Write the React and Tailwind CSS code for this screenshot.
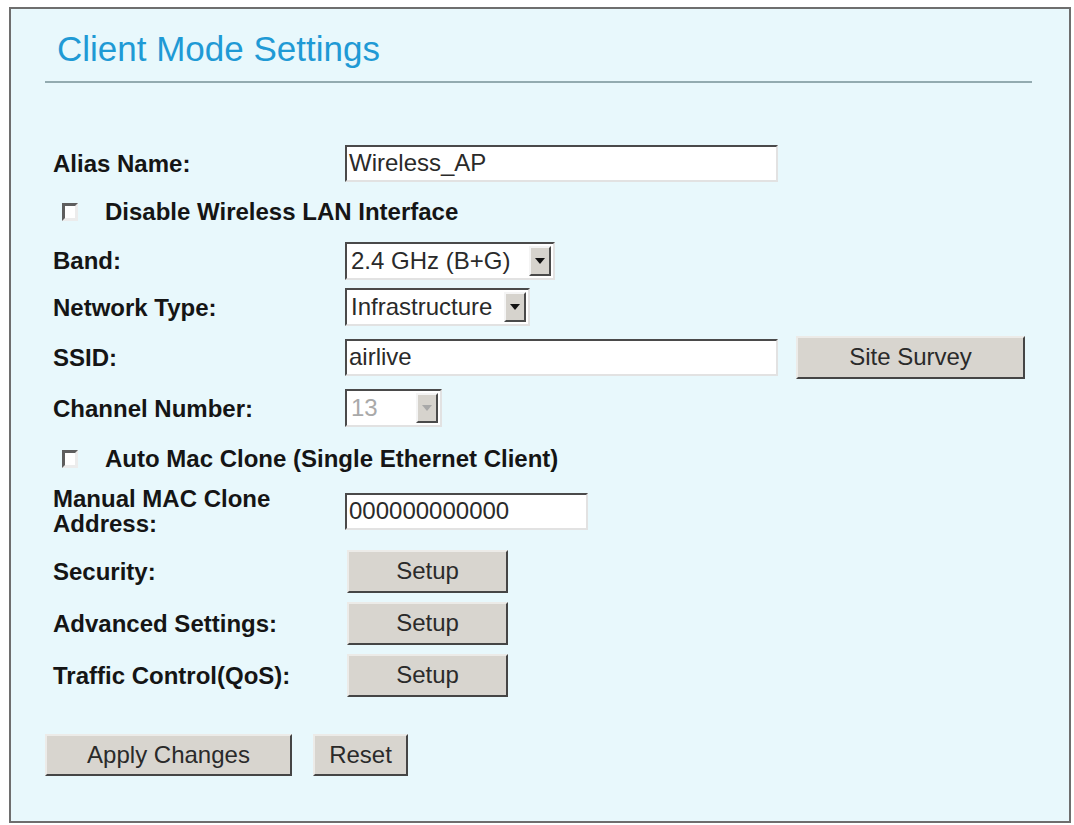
import React from 'react';

const font = { fontFamily: '"Liberation Sans", Arial, sans-serif' };

const TextInput = ({ value, width }) => (
  <div
    className={`${width} h-[37px] bg-white border-2 border-t-[#4a4a4a] border-l-[#4a4a4a] border-r-[#e2e2e2] border-b-[#e2e2e2] flex items-center pl-[2px] text-[24px] text-[#2a2a2a] leading-none`}
  >
    {value}
  </div>
);

const Arrow = ({ disabled }) => (
  <div className="w-[22px] h-[30px] bg-[#d6d3cd] border-2 border-t-[#f4f4f4] border-l-[#f4f4f4] border-r-[#4a4a4a] border-b-[#4a4a4a] flex items-center justify-center">
    <svg width="10" height="6" viewBox="0 0 10 6">
      <path d="M0 0h10L5 6z" fill={disabled ? '#a8a8a8' : '#111'} />
    </svg>
  </div>
);

const Select = ({ value, width, disabled }) => (
  <div
    className={`${width} h-[38px] bg-white border-2 border-t-[#4a4a4a] border-l-[#4a4a4a] border-r-[#e2e2e2] border-b-[#e2e2e2] flex items-center justify-between pl-[4px] pr-[2px] text-[24px] leading-none ${disabled ? 'text-[#a9a9a9]' : 'text-[#2a2a2a]'}`}
  >
    <span>{value}</span>
    <Arrow disabled={disabled} />
  </div>
);

const Button = ({ children, width, height = 'h-[43px]' }) => (
  <button
    className={`${width} ${height} bg-[#d8d5cf] border-2 border-t-[#ecebe8] border-l-[#ecebe8] border-r-[#454545] border-b-[#454545] text-[24px] text-[#2a2a2a] leading-none flex items-center justify-center`}
  >
    {children}
  </button>
);

const Checkbox = () => (
  <div className="w-[16px] h-[18px] bg-white border-[3px] border-t-[#5e5e5e] border-l-[#5e5e5e] border-r-[#ececec] border-b-[#ececec]" />
);

const Row = ({ label, h = 'h-[52px]', extra = '', children }) => (
  <div className={`flex items-center ${h} ${extra}`}>
    <div className="w-[292px] text-[24px] font-bold text-[#151515] leading-[25px]">{label}</div>
    <div className="flex items-center gap-[18px]">{children}</div>
  </div>
);

const CheckRow = ({ label, h }) => (
  <div className={`flex items-center ${h}`}>
    <div className="ml-[9px] w-[43px]">
      <Checkbox />
    </div>
    <span className="text-[24px] font-bold text-[#151515] leading-none">{label}</span>
  </div>
);

export default function App() {
  return (
    <div className="w-[1074px] h-[825px] bg-white pt-[7px] pl-[9px]" style={font}>
      <div className="w-[1062px] h-[816px] border-2 border-[#6e6e6e] bg-[#e8f8fc] flex flex-col">
        <h1 className="ml-[46px] mt-[20px] h-[40px] text-[35px] leading-[40px] text-[#1f9ad5]">
          Client Mode Settings
        </h1>
        <div className="ml-[34px] mt-[12px] w-[987px] h-[2px] bg-[#93abb0]" />

        <div className="ml-[42px] mt-[57px] flex flex-col">
          <Row label="Alias Name:" h="h-[46px]">
            <TextInput value="Wireless_AP" width="w-[433px]" />
          </Row>
          <CheckRow label="Disable Wireless LAN Interface" h="h-[52px]" />
          <Row label="Band:" h="h-[45px]">
            <Select value="2.4 GHz (B+G)" width="w-[210px]" />
          </Row>
          <Row label="Network Type:" h="h-[48px]">
            <Select value="Infrastructure" width="w-[185px]" />
          </Row>
          <Row label="SSID:" h="h-[52px]">
            <TextInput value="airlive" width="w-[433px]" />
            <Button width="w-[229px]">Site Survey</Button>
          </Row>
          <Row label="Channel Number:" h="h-[50px]">
            <Select value="13" width="w-[97px]" disabled />
          </Row>
          <CheckRow label="Auto Mac Clone (Single Ethernet Client)" h="h-[52px]" />
          <Row label={<>Manual MAC Clone<br />Address:</>} h="h-[52px]">
            <TextInput value="000000000000" width="w-[243px]" />
          </Row>
          <Row label="Security:" extra="mt-[8px]">
            <div className="ml-[2px]">
              <Button width="w-[161px]">Setup</Button>
            </div>
          </Row>
          <Row label="Advanced Settings:">
            <div className="ml-[2px]">
              <Button width="w-[161px]">Setup</Button>
            </div>
          </Row>
          <Row label="Traffic Control(QoS):">
            <div className="ml-[2px]">
              <Button width="w-[161px]">Setup</Button>
            </div>
          </Row>
        </div>

        <div className="ml-[34px] mt-[33px] flex gap-[21px]">
          <Button width="w-[247px]" height="h-[42px]">Apply Changes</Button>
          <Button width="w-[95px]" height="h-[42px]">Reset</Button>
        </div>
      </div>
    </div>
  );
}
